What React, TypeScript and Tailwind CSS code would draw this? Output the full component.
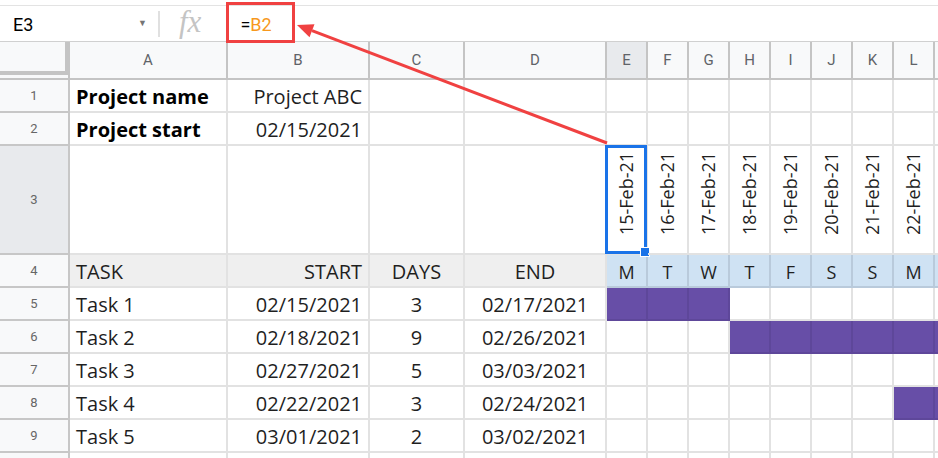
const COL_W = ['w-[158px]', 'w-[142px]', 'w-[95px]', 'w-[142px]']
const DATES = ['15-Feb-21', '16-Feb-21', '17-Feb-21', '18-Feb-21', '19-Feb-21', '20-Feb-21', '21-Feb-21', '22-Feb-21']
const DAYS = ['M', 'T', 'W', 'T', 'F', 'S', 'S', 'M']
// last column (M) is only a sliver at the right edge, so its letter is not shown
const LETTERS = ['A', 'B', 'C', 'D', 'E', 'F', 'G', 'H', 'I', 'J', 'K', 'L', '']

interface Task {
  name: string
  start: string
  days: string
  end: string
  bar: number[] // day-column indexes (0 = E) that are filled, 8 = M
}

const TASKS: Task[] = [
  { name: 'Task 1', start: '02/15/2021', days: '3', end: '02/17/2021', bar: [0, 1, 2] },
  { name: 'Task 2', start: '02/18/2021', days: '9', end: '02/26/2021', bar: [3, 4, 5, 6, 7, 8] },
  { name: 'Task 3', start: '02/27/2021', days: '5', end: '03/03/2021', bar: [] },
  { name: 'Task 4', start: '02/22/2021', days: '3', end: '02/24/2021', bar: [7, 8] },
  { name: 'Task 5', start: '03/01/2021', days: '2', end: '03/02/2021', bar: [] },
]

const cellFont = "font-['Open_Sans',sans-serif]"
const grid = 'border-r-2 border-b-2 border-[#e2e2e2]'

function RowNum({ n, selected = false }: { n?: number; selected?: boolean }) {
  return (
    <div
      className={`w-[70px] shrink-0 flex items-center justify-center border-r-2 border-b-2 border-[#c7c7c7] text-[13px] text-[#666] font-['Roboto',sans-serif] ${
        selected ? 'bg-[#e8eaed]' : 'bg-[#f8f9fa]'
      }`}
    >
      {n}
    </div>
  )
}

function Cell({ w, className = '', children }: { w: string; className?: string; children?: React.ReactNode }) {
  return (
    <div className={`${w} shrink-0 flex items-center px-[6px] pt-[3px] overflow-hidden whitespace-nowrap ${className}`}>
      {children}
    </div>
  )
}

function EmptyDays() {
  return (
    <>
      {Array.from({ length: 9 }).map((_, i) => (
        <div key={i} className={`w-[41px] shrink-0 ${grid}`} />
      ))}
    </>
  )
}

export default function App() {
  return (
    <div className="relative w-[938px] h-[458px] overflow-hidden bg-white text-[#1f1f1f]">
      {/* formula bar */}
      <div className="h-[42px] pt-[5px] border-b border-[#d0d0d0]">
        <div className="h-full border-t border-[#e3e3e3] flex items-center font-['Roboto',sans-serif]">
          <div className="w-[158px] flex items-center justify-between pl-[13px] pr-[11px] pt-[1px]">
            <span className="text-[18px] text-black">E3</span>
            <span className="text-[9px] text-[#757575]">▼</span>
          </div>
          <div className="w-[2px] h-[26px] bg-[#e0e0e0]" />
          <span className="ml-[19px] text-[31px] italic text-[#c4c4c4] font-['Liberation_Serif',serif] leading-none -mt-[5px]">
            fx
          </span>
          <span className="ml-[39px] text-[18px] pt-[1px]">
            <span className="text-black">=</span>
            <span className="text-[#f7981d]">B2</span>
          </span>
        </div>
      </div>

      {/* column headers */}
      <div className="flex h-[38px] font-['Roboto',sans-serif] text-[15px] text-[#5f6368]">
        <div className="w-[70px] shrink-0 flex flex-col bg-[#f8f9fa] border-b-2 border-[#c4c4c4]">
          <div className="h-[33px] border-r-[5px] border-b-[4px] border-[#c4c4c4]" />
          <div className="flex-1 border-r-2 border-[#c4c4c4]" />
        </div>
        {LETTERS.map((l, i) => (
          <div
            key={i}
            className={`${i < 4 ? COL_W[i] : 'w-[41px]'} shrink-0 flex items-center justify-center border-r-2 border-b-2 border-[#c4c4c4] ${
              l === 'E' ? 'bg-[#e8eaed]' : 'bg-[#f8f9fa]'
            }`}
          >
            {l}
          </div>
        ))}
      </div>

      <div className={`${cellFont} text-[20px]`}>
        {/* row 1 */}
        <div className="flex h-[33px]">
          <RowNum n={1} />
          <Cell w={COL_W[0]} className={`${grid} font-bold text-black`}>Project name</Cell>
          <Cell w={COL_W[1]} className={`${grid} justify-end`}>Project ABC</Cell>
          <Cell w={COL_W[2]} className={grid} />
          <Cell w={COL_W[3]} className={grid} />
          <EmptyDays />
        </div>

        {/* row 2 */}
        <div className="flex h-[33px]">
          <RowNum n={2} />
          <Cell w={COL_W[0]} className={`${grid} font-bold text-black`}>Project start</Cell>
          <Cell w={COL_W[1]} className={`${grid} justify-end`}>02/15/2021</Cell>
          <Cell w={COL_W[2]} className={grid} />
          <Cell w={COL_W[3]} className={grid} />
          <EmptyDays />
        </div>

        {/* row 3 - rotated dates */}
        <div className="flex h-[109px]">
          <RowNum n={3} selected />
          <Cell w={COL_W[0]} className={grid} />
          <Cell w={COL_W[1]} className={grid} />
          <Cell w={COL_W[2]} className={grid} />
          <Cell w={COL_W[3]} className={grid} />
          {DATES.map((d, i) => (
            <div key={d} className={`relative w-[41px] shrink-0 flex items-center justify-center pb-[12px] ${grid}`}>
              <span className="-rotate-90 whitespace-nowrap text-[18px]">{d}</span>
              {i === 0 && (
                <div className="absolute -left-[2px] -top-[1px] right-[-1px] bottom-[-1px] border-[3px] border-[#1a73e8]">
                  <div className="absolute -right-[6px] -bottom-[6px] w-[10px] h-[10px] bg-[#1a73e8] border border-white" />
                </div>
              )}
            </div>
          ))}
          <div className={`w-[41px] shrink-0 ${grid}`} />
        </div>

        {/* row 4 - header */}
        <div className="flex h-[33px]">
          <RowNum n={4} />
          <Cell w={COL_W[0]} className={`${grid} bg-[#efefef]`}>TASK</Cell>
          <Cell w={COL_W[1]} className={`${grid} bg-[#efefef] justify-end`}>START</Cell>
          <Cell w={COL_W[2]} className={`${grid} bg-[#efefef] justify-center`}>DAYS</Cell>
          <Cell w={COL_W[3]} className={`${grid} bg-[#efefef] justify-center`}>END</Cell>
          {DAYS.map((d, i) => (
            <div
              key={i}
              className="w-[41px] shrink-0 flex items-center justify-center pt-[3px] text-[18px] bg-[#cfe2f3] border-r-2 border-b-2 border-[#b9cadb]"
            >
              {d}
            </div>
          ))}
          <div className="w-[41px] shrink-0 bg-[#cfe2f3] border-r-2 border-b-2 border-[#b9cadb]" />
        </div>

        {/* task rows */}
        {TASKS.map((t, r) => (
          <div key={t.name} className="flex h-[33px]">
            <RowNum n={r + 5} />
            <Cell w={COL_W[0]} className={grid}>{t.name}</Cell>
            <Cell w={COL_W[1]} className={`${grid} justify-end`}>{t.start}</Cell>
            <Cell w={COL_W[2]} className={`${grid} justify-center`}>{t.days}</Cell>
            <Cell w={COL_W[3]} className={`${grid} justify-center`}>{t.end}</Cell>
            {Array.from({ length: 9 }).map((_, i) => (
              <div
                key={i}
                className={`w-[41px] shrink-0 border-r-2 border-b-2 ${
                  t.bar.includes(i) ? 'bg-[#674ea7] border-[#5e479a]' : 'border-[#e2e2e2]'
                }`}
              />
            ))}
          </div>
        ))}

        {/* row 10 (cut off) */}
        <div className="flex h-[33px]">
          <RowNum />
          <Cell w={COL_W[0]} className={grid} />
          <Cell w={COL_W[1]} className={grid} />
          <Cell w={COL_W[2]} className={grid} />
          <Cell w={COL_W[3]} className={grid} />
          <EmptyDays />
        </div>
      </div>

      {/* annotation: red box around formula + arrow */}
      <div className="absolute left-[226px] top-[2px] w-[69px] h-[41px] border-[3px] border-[#f04141]" />
      <svg className="absolute inset-0 pointer-events-none" width={938} height={458}>
        <line x1={607} y1={143} x2={312} y2={30.7} stroke="#f04141" strokeWidth={3} />
        <polygon points="297,25 314.5,24.2 309.5,37.2" fill="#f04141" />
      </svg>
    </div>
  )
}
